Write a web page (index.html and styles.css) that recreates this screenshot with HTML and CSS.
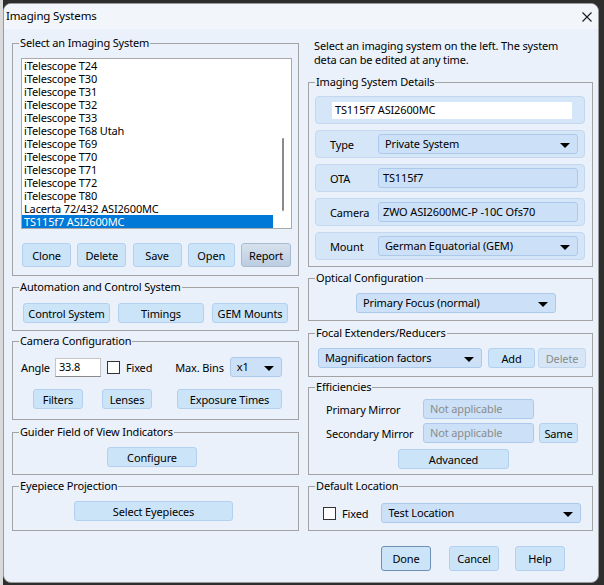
FILE: index.html
```html
<!DOCTYPE html>
<html lang="en">
<head>
<meta charset="UTF-8">
<title>Imaging Systems</title>
<link rel="stylesheet" href="styles.css">
</head>
<body>
<div class="window">
  <div class="titlebar">
    <span class="title">Imaging Systems</span>
    <svg class="close" width="10" height="10" viewBox="0 0 10 10"><path d="M0.5 0.5 L9.5 9.5 M9.5 0.5 L0.5 9.5" stroke="#1a1a1a" stroke-width="1.1" fill="none"/></svg>
  </div>
  <div class="content">
    <div class="col col-left">
      <div class="group g-select">
        <span class="group-title">Select an Imaging System</span>
        <div class="listbox">
          <ul>
            <li>iTelescope T24</li>
            <li>iTelescope T30</li>
            <li>iTelescope T31</li>
            <li>iTelescope T32</li>
            <li>iTelescope T33</li>
            <li>iTelescope T68 Utah</li>
            <li>iTelescope T69</li>
            <li>iTelescope T70</li>
            <li>iTelescope T71</li>
            <li>iTelescope T72</li>
            <li>iTelescope T80</li>
            <li>Lacerta 72/432 ASI2600MC</li>
            <li class="selected">TS115f7 ASI2600MC</li>
          </ul>
          <div class="scroll-thumb"></div>
        </div>
        <div class="list-buttons">
          <button class="btn w49">Clone</button>
          <button class="btn w49">Delete</button>
          <button class="btn w49">Save</button>
          <button class="btn w47">Open</button>
          <button class="btn btn-hover w50">Report</button>
        </div>
      </div>

      <div class="group g-auto">
        <span class="group-title">Automation and Control System</span>
        <div class="row">
          <button class="btn h20 w87">Control System</button>
          <button class="btn h20 w86">Timings</button>
          <button class="btn h20 w76">GEM Mounts</button>
        </div>
      </div>

      <div class="group g-camera">
        <span class="group-title">Camera Configuration</span>
        <div class="row cam-top">
          <span class="lbl">Angle</span>
          <input class="textbox angle" type="text" value="33.8">
          <span class="check"></span>
          <span class="lbl fixed">Fixed</span>
          <span class="lbl bins">Max. Bins</span>
          <div class="dropdown bins-dd">x1<span class="arrow"></span></div>
        </div>
        <div class="row cam-bottom">
          <button class="btn h20 w50">Filters</button>
          <button class="btn h20 w50 lenses">Lenses</button>
          <button class="btn h20 w105 exposure">Exposure Times</button>
        </div>
      </div>

      <div class="group g-guider">
        <span class="group-title">Guider Field of View Indicators</span>
        <button class="btn h20 w90 configure">Configure</button>
      </div>

      <div class="group g-eyepiece">
        <span class="group-title">Eyepiece Projection</span>
        <button class="btn h20 w159 eyepieces">Select Eyepieces</button>
      </div>
    </div>

    <div class="col col-right">
      <p class="intro">Select an imaging system on the left. The system<br>deta can be edited at any time.</p>

      <div class="group g-details">
        <span class="group-title">Imaging System Details</span>
        <div class="panel">
          <div class="name-box">TS115f7 ASI2600MC</div>
        </div>
        <div class="panel">
          <span class="panel-lbl">Type</span>
          <div class="dropdown w200">Private System<span class="arrow"></span></div>
        </div>
        <div class="panel">
          <span class="panel-lbl">OTA</span>
          <div class="field w200">TS115f7</div>
        </div>
        <div class="panel">
          <span class="panel-lbl">Camera</span>
          <div class="field w200">ZWO ASI2600MC-P -10C Ofs70</div>
        </div>
        <div class="panel">
          <span class="panel-lbl">Mount</span>
          <div class="dropdown w200">German Equatorial (GEM)<span class="arrow"></span></div>
        </div>
      </div>

      <div class="group g-optical">
        <span class="group-title">Optical Configuration</span>
        <div class="dropdown w200 optical-dd">Primary Focus (normal)<span class="arrow"></span></div>
      </div>

      <div class="group g-focal">
        <span class="group-title">Focal Extenders/Reducers</span>
        <div class="row">
          <div class="dropdown w164">Magnification factors<span class="arrow"></span></div>
          <button class="btn h20 w47 add">Add</button>
          <button class="btn h20 w48 disabled">Delete</button>
        </div>
      </div>

      <div class="group g-eff">
        <span class="group-title">Efficiencies</span>
        <div class="row eff-row">
          <span class="lbl eff-lbl">Primary Mirror</span>
          <div class="field disabled-field w111">Not applicable</div>
        </div>
        <div class="row eff-row second">
          <span class="lbl eff-lbl">Secondary Mirror</span>
          <div class="field disabled-field w111">Not applicable</div>
          <button class="btn h20 w39 same">Same</button>
        </div>
        <button class="btn h20 w111 advanced">Advanced</button>
      </div>

      <div class="group g-location">
        <span class="group-title">Default Location</span>
        <div class="row">
          <span class="check"></span>
          <span class="lbl fixed">Fixed</span>
          <div class="dropdown w200 loc-dd">Test Location<span class="arrow"></span></div>
        </div>
      </div>

      <div class="dialog-buttons">
        <button class="btn dlg btn-default">Done</button>
        <button class="btn dlg">Cancel</button>
        <button class="btn dlg">Help</button>
      </div>
    </div>
  </div>
</div>
</body>
</html>
```

FILE: styles.css
```css
* {
  margin: 0;
  padding: 0;
  box-sizing: border-box;
}
body {
  width: 604px;
  height: 585px;
  overflow: hidden;
  background: linear-gradient(90deg, #d9d9d9 0 3px, #2e2e2e 3px);
  font-family: "Noto Sans", "Open Sans", sans-serif;
  font-size: 11px;
  letter-spacing: -0.15px;
  color: #000;
}
.window {
  width: 596px;
  height: 580px;
  margin: 3px 0 0 3px;
  background-color: #eaf1fb;
  border: 1px solid #9a9a9a;
  border-radius: 8px;
  overflow: hidden;
}
.titlebar {
  height: 25px;
  display: flex;
  align-items: center;
  justify-content: space-between;
  padding: 0 5px 2px 2px;
  background-color: #f2f5fa;
}
.title {
  font-size: 11.5px;
}
.close {
  margin-top: 2px;
  margin-right: 1px;
}
.content {
  display: flex;
  gap: 9px;
  padding: 0 5px 0 8px;
}
.col {
  display: flex;
  flex-direction: column;
}
.col-left {
  width: 287px;
  padding-top: 14px;
}
.col-right {
  width: 285px;
  padding-top: 10px;
}

/* group boxes */
.group {
  position: relative;
  border: 1px solid #a3a3a3;
}
.group-title {
  position: absolute;
  top: -9px;
  left: 6px;
  padding: 0 1px;
  line-height: 16px;
  background-color: #eaf1fb;
  white-space: nowrap;
}
.row {
  display: flex;
  align-items: center;
}
.lbl {
  white-space: nowrap;
}

/* buttons */
.btn {
  height: 24px;
  font: inherit;
  letter-spacing: inherit;
  color: #000;
  background-color: #cce4f7;
  border: 1px solid #b3d1ef;
  border-radius: 3px;
  text-align: center;
  white-space: nowrap;
}
.btn-hover {
  background: linear-gradient(#d6e1ed, #bccde2);
  border-color: #aabbd0;
}
.btn-default {
  border-color: #6e8fb6;
}
.btn.disabled {
  color: #8c8c8c;
  background-color: #d6e6f6;
  border-color: #c2d8ef;
}
.h20 { height: 20px; }
.w39 { width: 39px; }
.w47 { width: 47px; }
.w48 { width: 48px; }
.w49 { width: 49px; }
.w50 { width: 50px; }
.w76 { width: 76px; }
.w86 { width: 86px; }
.w87 { width: 87px; }
.w90 { width: 90px; }
.w105 { width: 105px; }
.w111 { width: 111px; }
.w159 { width: 159px; }
.w164 { width: 164px; }
.w200 { width: 200px; }

/* inputs */
.textbox {
  height: 19px;
  font: inherit;
  letter-spacing: inherit;
  background-color: #fff;
  border: 1px solid #c4c4c4;
  border-bottom-color: #8a8a8a;
  padding: 0 0 2px 3px;
  outline: none;
}
.check {
  width: 13px;
  height: 13px;
  background-color: #fff;
  border: 1px solid #333;
}
.dropdown,
.field {
  position: relative;
  height: 20px;
  display: flex;
  align-items: center;
  padding: 0 0 1px 6px;
  background-color: #cce1f7;
  border: 1px solid #adc9ea;
  border-radius: 3px;
  white-space: nowrap;
}
.field {
  padding-left: 4px;
}
.disabled-field {
  color: #8c8c8c;
  padding-left: 6px;
}
.arrow {
  position: absolute;
  right: 7px;
  top: 8px;
  border-left: 5px solid transparent;
  border-right: 5px solid transparent;
  border-top: 5px solid #000;
}

/* image system list */
.g-select {
  height: 233px;
  padding: 14px 6px 0 8px;
}
.listbox {
  position: relative;
  height: 171px;
  background-color: #fff;
  border: 1px solid #a9a9a9;
}
.listbox ul {
  list-style: none;
  width: 251px;
}
.listbox li {
  height: 13px;
  line-height: 13px;
  padding-left: 2px;
  white-space: nowrap;
}
.listbox li.selected {
  background-color: #0078d7;
  color: #fff;
}
.scroll-thumb {
  position: absolute;
  left: 260px;
  top: 79px;
  width: 2px;
  height: 73px;
  background-color: #8a8a8a;
  border-radius: 1px;
}
.list-buttons {
  display: flex;
  justify-content: space-between;
  margin: 14px 1px 0 1px;
}

.g-auto {
  height: 44px;
  margin-top: 11px;
  padding: 15px 0 0 10px;
}
.g-auto .row {
  gap: 8px;
}

.g-camera {
  height: 79px;
  margin-top: 10px;
  padding: 15px 0 0 8px;
}
.cam-top .angle {
  width: 46px;
  margin-left: 5px;
}
.cam-top .check {
  margin-left: 6px;
}
.fixed {
  margin-left: 6px;
}
.bins {
  margin-left: 23px;
}
.bins-dd {
  width: 52px;
  margin-left: 6px;
}
.cam-bottom {
  margin-top: 12px;
  padding-left: 12px;
}
.lenses { margin-left: 19px; }
.exposure { margin-left: 25px; }

.g-guider {
  height: 43px;
  margin-top: 12px;
  padding: 14px 0 0 94px;
}
.g-eyepiece {
  height: 45px;
  margin-top: 11px;
  padding: 14px 0 0 61px;
}

/* right column */
.intro {
  line-height: 14px;
  padding-left: 6px;
}
.g-details {
  height: 185px;
  margin-top: 15px;
  padding: 13px 7px 0 6px;
  display: flex;
  flex-direction: column;
  gap: 6px;
}
.panel {
  height: 28px;
  display: flex;
  align-items: center;
  padding-left: 14px;
  background-color: #d6e6f9;
  border: 1px solid #c3d7ee;
  border-radius: 4px;
}
.panel-lbl {
  width: 48px;
}
.name-box {
  width: 240px;
  height: 17px;
  margin-left: 2px;
  padding: 0 0 1px 3px;
  background-color: #fff;
  line-height: 16px;
}
.g-optical {
  height: 43px;
  margin-top: 11px;
  padding: 14px 0 0 47px;
}
.g-focal {
  height: 44px;
  margin-top: 12px;
  padding: 14px 0 0 9px;
}
.add { margin-left: 6px; }
.disabled { margin-left: 3px; }
.g-eff {
  height: 88px;
  margin-top: 10px;
  padding: 11px 0 0 17px;
}
.eff-lbl {
  width: 97px;
}
.second {
  margin-top: 4px;
}
.same { margin-left: 5px; }
.advanced {
  margin: 6px 0 0 72px;
}
.g-location {
  height: 45px;
  margin-top: 11px;
  padding: 16px 0 0 14px;
}
.loc-dd {
  margin-left: 13px;
}
.dialog-buttons {
  display: flex;
  margin: 15px 0 0 73px;
}
.dlg {
  width: 50px;
  height: 25px;
}
.dlg + .dlg {
  margin-left: 18px;
}
.dlg:last-child {
  margin-left: 16px;
}
```
